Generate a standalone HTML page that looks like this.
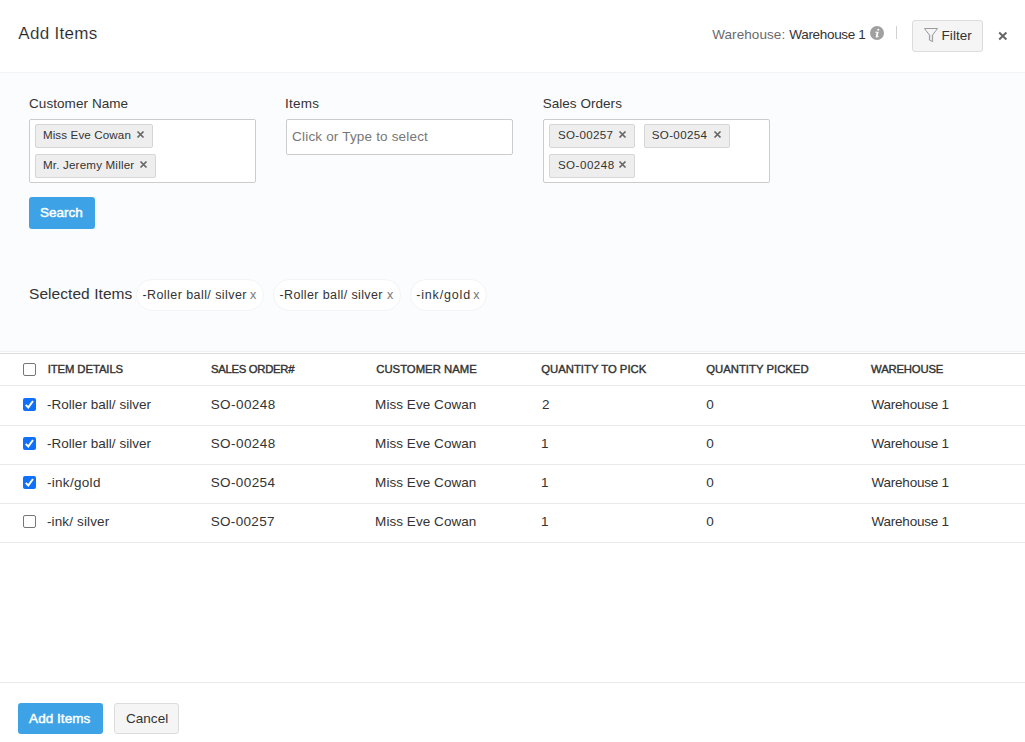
<!DOCTYPE html>
<html>
<head>
<meta charset="utf-8">
<title>Add Items</title>
<style>
*{box-sizing:border-box;margin:0;padding:0}
html,body{width:1025px;height:742px;overflow:hidden;background:#fff}
body{font-family:"Liberation Sans",sans-serif;color:#333;font-size:14px;position:relative}
.t{position:absolute;white-space:nowrap}
.a{position:absolute}
.box{position:absolute;background:#fff;border:1px solid #ccc;border-radius:2px}
.tag{position:absolute;height:24px;background:#eee;border:1px solid #d6d6d6;border-radius:2px}
.x{position:absolute}
.bp{position:absolute;background:#3ea3e6;border-radius:3px}
.bs{position:absolute;background:#f5f5f5;border:1px solid #dcdcdc;border-radius:3px}
.pill{position:absolute;top:279px;height:32px;border-radius:16px;background:#fff;border:1px solid #f3f4f6}
.hl{position:absolute;left:0;width:1025px;height:1px;background:#e9e9e9}
.cb{position:absolute;left:23px;width:13px;height:13px;border-radius:2px}
.cb.off{border:1px solid #767676;background:#fff}
.cb.on{background:#0f71fb}
.cb svg{display:block}
</style>
</head>
<body>
<span class="t" style="left:18.28px;top:23px;font-size:17px;line-height:22px;color:#222;letter-spacing:0.304px;-webkit-text-stroke:0.15px #fff">Add Items</span>
<span class="t" style="left:712.22px;top:27px;font-size:13.5px;line-height:16px;color:#6a6a6a;letter-spacing:0.070px">Warehouse:</span>
<span class="t" style="left:789.34px;top:27px;font-size:13.5px;line-height:16px;color:#333;letter-spacing:-0.324px">Warehouse 1</span>
<svg class="a" style="left:870px;top:26px" width="14" height="14" viewBox="0 0 14 14"><circle cx="7" cy="7" r="7" fill="#a0a0a0"/><circle cx="8.3" cy="3.85" r="1" fill="#fff"/><path d="M5.1 5.7h3.6l-1.05 4.5q-.1.5.4.3l.7-.4.3.5q-1.4 1.1-2.6.9-.9-.2-.7-1.1l.8-3.8h-1.6z" fill="#fff"/></svg>
<div class="a" style="left:896px;top:26px;width:1px;height:13px;background:#d2d2d2"></div>
<div class="bs" style="left:912px;top:20px;width:71px;height:32px"></div>
<svg class="a" style="left:923px;top:27px" width="16" height="16" viewBox="0 0 16 16"><path d="M1.5 1.5H14.5L9.6 8V14.6L6.4 13.1V8Z" fill="#e6e6e6" stroke="#9a9a9a" stroke-width="1" stroke-linejoin="round"/><path d="M2.6 2h10.8L9.1 7.6H6.9z" fill="#f5f5f5"/></svg>
<span class="t" style="left:941.54px;top:28px;font-size:13.5px;line-height:16px;color:#333;letter-spacing:0.054px">Filter</span>
<svg class="a" style="left:997px;top:30px" width="12" height="12" viewBox="0 0 12 12"><path d="M2.2 2.6l7.2 6.8M9.4 2.6l-7.2 6.8" stroke="#666" stroke-width="2"/></svg>
<div class="a" style="left:0;top:72px;width:1025px;height:280px;background:#fbfcfe;border-top:1px solid #f4f4f4;border-bottom:1px solid #f1f1f3"></div>
<div class="a" style="left:0;top:353px;width:1025px;height:1px;background:#dcdcdc"></div>
<span class="t" style="left:29.00px;top:96px;font-size:13.5px;line-height:16px;color:#333;letter-spacing:0.068px">Customer Name</span>
<span class="t" style="left:285.04px;top:96px;font-size:13.5px;line-height:16px;color:#333;letter-spacing:0.247px">Items</span>
<span class="t" style="left:542.66px;top:96px;font-size:13.5px;line-height:16px;color:#333;letter-spacing:0.041px">Sales Orders</span>
<div class="box" style="left:29px;top:119px;width:227px;height:64px"></div>
<div class="box" style="left:286px;top:119px;width:227px;height:36px"></div>
<div class="box" style="left:543px;top:119px;width:227px;height:64px"></div>
<span class="t" style="left:292.10px;top:129px;font-size:13.5px;line-height:16px;color:#777;letter-spacing:0.180px">Click or Type to select</span>
<div class="tag" style="left:35px;top:124px;width:118px"></div>
<div class="tag" style="left:35px;top:154px;width:121px"></div>
<div class="tag" style="left:549px;top:124px;width:86px"></div>
<div class="tag" style="left:644px;top:124px;width:86px"></div>
<div class="tag" style="left:549px;top:154px;width:86px"></div>
<span class="t" style="left:42.88px;top:128px;font-size:11.6px;line-height:14px;color:#333;letter-spacing:0.125px">Miss Eve Cowan</span>
<span class="t" style="left:42.88px;top:158px;font-size:11.6px;line-height:14px;color:#333;letter-spacing:0.191px">Mr. Jeremy Miller</span>
<span class="t" style="left:557.88px;top:128px;font-size:11.6px;line-height:14px;color:#333;letter-spacing:0.334px">SO-00257</span>
<span class="t" style="left:651.66px;top:128px;font-size:11.6px;line-height:14px;color:#333;letter-spacing:0.360px">SO-00254</span>
<span class="t" style="left:557.88px;top:158px;font-size:11.6px;line-height:14px;color:#333;letter-spacing:0.489px">SO-00248</span>
<svg class="x" style="left:135.9px;top:130.1px" width="9" height="9" viewBox="0 0 9 9"><path d="M1.5 1.5l6 6M7.5 1.5l-6 6" stroke="#666" stroke-width="1.75"/></svg>
<svg class="x" style="left:138.9px;top:160.1px" width="9" height="9" viewBox="0 0 9 9"><path d="M1.5 1.5l6 6M7.5 1.5l-6 6" stroke="#666" stroke-width="1.75"/></svg>
<svg class="x" style="left:618.0px;top:130.1px" width="9" height="9" viewBox="0 0 9 9"><path d="M1.5 1.5l6 6M7.5 1.5l-6 6" stroke="#666" stroke-width="1.75"/></svg>
<svg class="x" style="left:713.3px;top:130.1px" width="9" height="9" viewBox="0 0 9 9"><path d="M1.5 1.5l6 6M7.5 1.5l-6 6" stroke="#666" stroke-width="1.75"/></svg>
<svg class="x" style="left:618.0px;top:160.1px" width="9" height="9" viewBox="0 0 9 9"><path d="M1.5 1.5l6 6M7.5 1.5l-6 6" stroke="#666" stroke-width="1.75"/></svg>
<div class="bp" style="left:29px;top:197px;width:66px;height:32px"></div>
<span class="t" style="left:39.94px;top:205px;font-size:13.5px;line-height:16px;color:#fff;letter-spacing:0.018px;-webkit-text-stroke:0.45px #fff">Search</span>
<span class="t" style="left:29.04px;top:285px;font-size:15.5px;line-height:18px;color:#333;letter-spacing:0.055px">Selected Items</span>
<div class="pill" style="left:136px;width:127.5px"></div>
<div class="pill" style="left:273px;width:127.5px"></div>
<div class="pill" style="left:410px;width:76.5px"></div>
<span class="t" style="left:142.44px;top:287px;font-size:12.5px;line-height:16px;color:#333;letter-spacing:0.431px">-Roller ball/ silver</span>
<span class="t" style="left:249.94px;top:287px;font-size:12.5px;line-height:16px;color:#777">x</span>
<span class="t" style="left:279.44px;top:287px;font-size:12.5px;line-height:16px;color:#333;letter-spacing:0.379px">-Roller ball/ silver</span>
<span class="t" style="left:386.94px;top:287px;font-size:12.5px;line-height:16px;color:#777">x</span>
<span class="t" style="left:416.16px;top:287px;font-size:12.5px;line-height:16px;color:#333;letter-spacing:0.844px">-ink/gold</span>
<span class="t" style="left:473.16px;top:287px;font-size:12.5px;line-height:16px;color:#777">x</span>
<div class="cb off" style="top:363px"></div>
<span class="t" style="left:47.66px;top:363px;font-size:11.3px;line-height:13px;color:#333;letter-spacing:-0.082px;-webkit-text-stroke:0.4px #333">ITEM DETAILS</span>
<span class="t" style="left:210.94px;top:363px;font-size:11.3px;line-height:13px;color:#333;letter-spacing:-0.278px;-webkit-text-stroke:0.4px #333">SALES ORDER#</span>
<span class="t" style="left:376.28px;top:363px;font-size:11.3px;line-height:13px;color:#333;letter-spacing:0.015px;-webkit-text-stroke:0.4px #333">CUSTOMER NAME</span>
<span class="t" style="left:541.22px;top:363px;font-size:11.3px;line-height:13px;color:#333;letter-spacing:0.012px;-webkit-text-stroke:0.4px #333">QUANTITY TO PICK</span>
<span class="t" style="left:706.28px;top:363px;font-size:11.3px;line-height:13px;color:#333;letter-spacing:0.013px;-webkit-text-stroke:0.4px #333">QUANTITY PICKED</span>
<span class="t" style="left:871.12px;top:363px;font-size:11.3px;line-height:13px;color:#333;letter-spacing:-0.180px;-webkit-text-stroke:0.4px #333">WAREHOUSE</span>
<div class="hl" style="top:385px"></div>
<div class="hl" style="top:425px"></div>
<div class="hl" style="top:464px"></div>
<div class="hl" style="top:503px"></div>
<div class="hl" style="top:542px"></div>
<div class="hl" style="top:682px"></div>
<div class="cb on" style="top:398px"><svg width="13" height="13" viewBox="0 0 13 13"><path d="M2.7 6.9l2.6 2.5L10 3" fill="none" stroke="#fff" stroke-width="2"/></svg></div>
<span class="t" style="left:46.94px;top:397px;font-size:13.5px;line-height:16px;color:#333;letter-spacing:0.033px">-Roller ball/ silver</span>
<span class="t" style="left:210.66px;top:397px;font-size:13.5px;line-height:16px;color:#333;letter-spacing:0.437px">SO-00248</span>
<span class="t" style="left:375.10px;top:397px;font-size:13.5px;line-height:16px;color:#333;letter-spacing:0.055px">Miss Eve Cowan</span>
<span class="t" style="left:542.00px;top:397px;font-size:13.5px;line-height:16px;color:#333">2</span>
<span class="t" style="left:706.16px;top:397px;font-size:13.5px;line-height:16px;color:#333">0</span>
<span class="t" style="left:871.56px;top:397px;font-size:13.5px;line-height:16px;color:#333;letter-spacing:-0.234px">Warehouse 1</span>
<div class="cb on" style="top:437px"><svg width="13" height="13" viewBox="0 0 13 13"><path d="M2.7 6.9l2.6 2.5L10 3" fill="none" stroke="#fff" stroke-width="2"/></svg></div>
<span class="t" style="left:46.94px;top:436px;font-size:13.5px;line-height:16px;color:#333;letter-spacing:0.033px">-Roller ball/ silver</span>
<span class="t" style="left:210.66px;top:436px;font-size:13.5px;line-height:16px;color:#333;letter-spacing:0.437px">SO-00248</span>
<span class="t" style="left:375.10px;top:436px;font-size:13.5px;line-height:16px;color:#333;letter-spacing:0.055px">Miss Eve Cowan</span>
<span class="t" style="left:541.04px;top:436px;font-size:13.5px;line-height:16px;color:#333">1</span>
<span class="t" style="left:706.16px;top:436px;font-size:13.5px;line-height:16px;color:#333">0</span>
<span class="t" style="left:871.56px;top:436px;font-size:13.5px;line-height:16px;color:#333;letter-spacing:-0.234px">Warehouse 1</span>
<div class="cb on" style="top:476px"><svg width="13" height="13" viewBox="0 0 13 13"><path d="M2.7 6.9l2.6 2.5L10 3" fill="none" stroke="#fff" stroke-width="2"/></svg></div>
<span class="t" style="left:46.94px;top:475px;font-size:13.5px;line-height:16px;color:#333;letter-spacing:0.304px">-ink/gold</span>
<span class="t" style="left:210.66px;top:475px;font-size:13.5px;line-height:16px;color:#333;letter-spacing:0.399px">SO-00254</span>
<span class="t" style="left:375.10px;top:475px;font-size:13.5px;line-height:16px;color:#333;letter-spacing:0.055px">Miss Eve Cowan</span>
<span class="t" style="left:541.04px;top:475px;font-size:13.5px;line-height:16px;color:#333">1</span>
<span class="t" style="left:706.16px;top:475px;font-size:13.5px;line-height:16px;color:#333">0</span>
<span class="t" style="left:871.56px;top:475px;font-size:13.5px;line-height:16px;color:#333;letter-spacing:-0.234px">Warehouse 1</span>
<div class="cb off" style="top:515px"></div>
<span class="t" style="left:46.94px;top:514px;font-size:13.5px;line-height:16px;color:#333;letter-spacing:0.139px">-ink/ silver</span>
<span class="t" style="left:210.66px;top:514px;font-size:13.5px;line-height:16px;color:#333;letter-spacing:0.334px">SO-00257</span>
<span class="t" style="left:375.10px;top:514px;font-size:13.5px;line-height:16px;color:#333;letter-spacing:0.055px">Miss Eve Cowan</span>
<span class="t" style="left:541.04px;top:514px;font-size:13.5px;line-height:16px;color:#333">1</span>
<span class="t" style="left:706.16px;top:514px;font-size:13.5px;line-height:16px;color:#333">0</span>
<span class="t" style="left:871.56px;top:514px;font-size:13.5px;line-height:16px;color:#333;letter-spacing:-0.234px">Warehouse 1</span>
<div class="bp" style="left:18px;top:703px;width:85px;height:31px"></div>
<div class="bs" style="left:114px;top:703px;width:65px;height:31px"></div>
<span class="t" style="left:29.12px;top:711px;font-size:13.5px;line-height:16px;color:#fff;letter-spacing:0.045px;-webkit-text-stroke:0.45px #fff">Add Items</span>
<span class="t" style="left:125.88px;top:711px;font-size:13.5px;line-height:16px;color:#333;letter-spacing:0.072px">Cancel</span>
</body>
</html>
